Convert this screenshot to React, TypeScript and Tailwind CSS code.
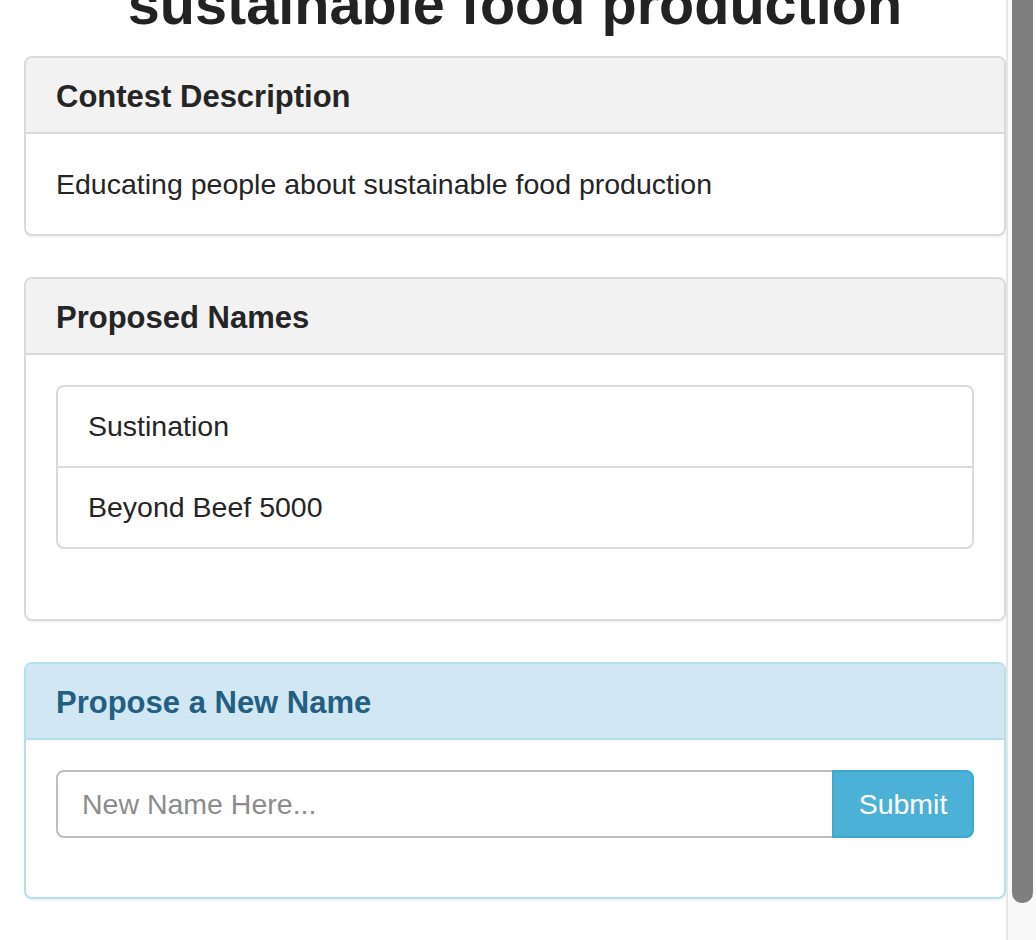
import React from "react"

const font = { fontFamily: '"Liberation Sans", Arial, sans-serif' }

interface PanelProps {
  title: string
  info?: boolean
  bodyClassName?: string
  children: React.ReactNode
}

const Panel: React.FC<PanelProps> = ({ title, info, bodyClassName, children }) => {
  return (
    <div
      className={`rounded-[8px] border-2 bg-white shadow-[0_2px_2px_rgba(0,0,0,0.05)] ${
        info ? "border-[#b4e0ee]" : "border-[#dadada]"
      }`}
    >
      <div
        className={`rounded-t-[6px] border-b-2 px-[30px] pt-[22px] pb-[18px] ${
          info
            ? "border-[#b4e0ee] bg-[#d1e8f4] text-[#245e80]"
            : "border-[#dadada] bg-[#f2f2f2] text-[#252525]"
        }`}
      >
        <h3 className="text-[31px] font-bold leading-[34px]">{title}</h3>
      </div>
      <div className={bodyClassName ?? "p-[30px]"}>{children}</div>
    </div>
  )
}

const names = ["Sustination", "Beyond Beef 5000"]

export default function App() {
  return (
    <div className="flex h-[940px] w-[1036px] overflow-hidden bg-white text-[#252525]" style={font}>
      <div className="w-[1006px] shrink-0">
        <div className="h-[56px] overflow-hidden pl-[24px]">
          <h1 className="-mt-[27px] text-center text-[57.6px] font-bold leading-[1.1] text-[#222]">
            sustainable food production
          </h1>
        </div>

        <div className="ml-[24px] flex flex-col gap-[41px]">
          <Panel title="Contest Description">
            <p className="text-[28.5px] leading-[40px]">
              Educating people about sustainable food production
            </p>
          </Panel>

          <Panel title="Proposed Names" bodyClassName="px-[30px] pt-[30px] pb-[70px]">
            <ul className="mx-0 rounded-[8px] border-2 border-[#dadada]">
              {names.map((n, i) => (
                <li
                  key={n}
                  className={`px-[30px] py-[20px] text-[28.5px] leading-[39px] ${
                    i > 0 ? "border-t-2 border-[#dadada]" : ""
                  }`}
                >
                  {n}
                </li>
              ))}
            </ul>
          </Panel>

          <Panel title="Propose a New Name" info bodyClassName="px-[30px] pt-[30px] pb-[59px]">
            <div className="flex h-[68px]">
              <input
                type="text"
                placeholder="New Name Here..."
                className="h-full min-w-0 grow rounded-l-[8px] border-2 border-[#bdbdbd] bg-white px-[24px] text-[28.5px] text-[#252525] outline-none placeholder:text-[#8c8c8c]"
                style={font}
              />
              <button
                className="-ml-[2px] h-full w-[142px] rounded-r-[8px] border-2 border-[#3ea8d1] bg-[#4bb1d6] text-[28.5px] text-white"
                style={font}
              >
                Submit
              </button>
            </div>
          </Panel>
        </div>
      </div>

      <div className="h-full w-[30px] shrink-0 border-l-2 border-[#e6e6e6] bg-[#f9f9f9]">
        <div className="ml-[4px] h-[903px] w-[21px] rounded-b-[10px] bg-[#7f7f7f]" />
      </div>
    </div>
  )
}
